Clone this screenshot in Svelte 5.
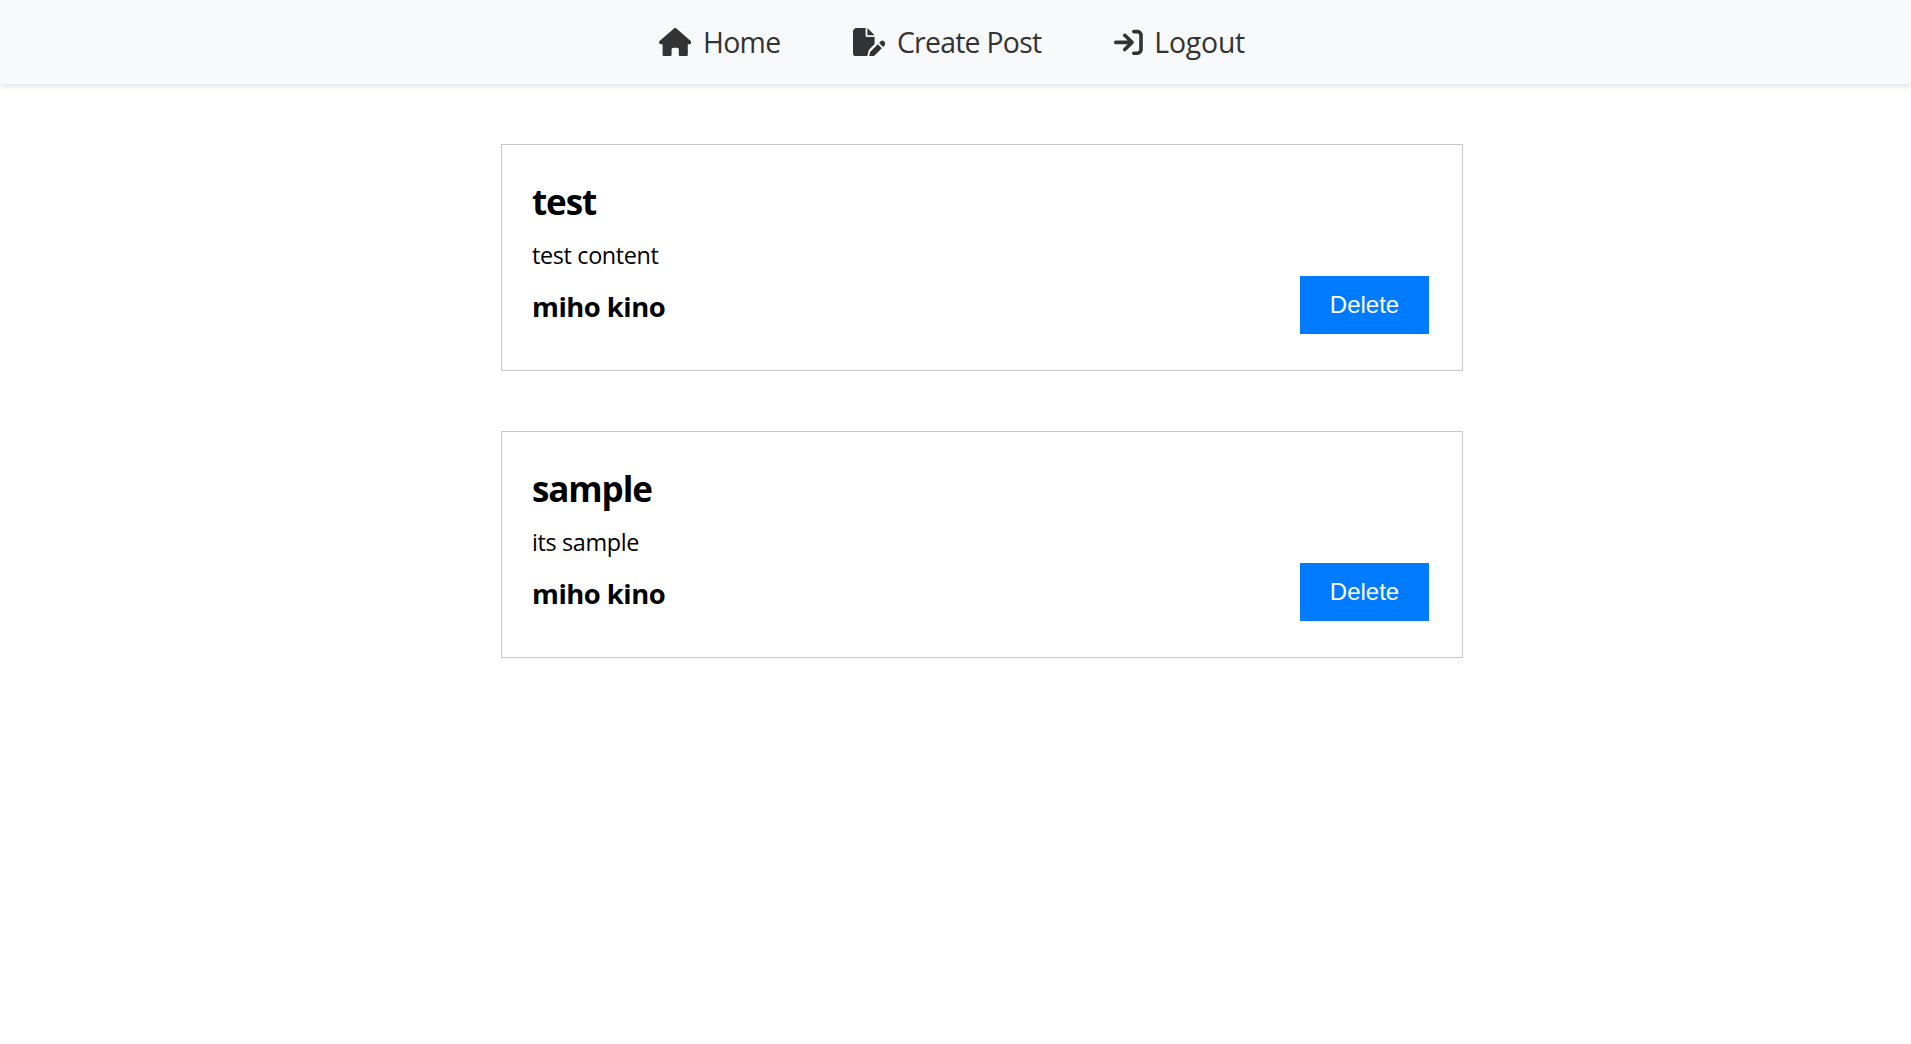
<script lang="ts">
  const links = [
    {
      key: 'home',
      label: 'Home',
      box: '0 0 576 512',
      path: 'M575.8 255.5c0 18-15 32.1-32 32.1l-32 0 .7 160.2c0 2.7-.2 5.4-.5 8.1l0 16.2c0 22.1-17.9 40-40 40l-16 0c-1.1 0-2.2 0-3.3-.1c-1.4 .1-2.8 .1-4.2 .1L416 512l-24 0c-22.1 0-40-17.9-40-40l0-24 0-64c0-17.7-14.3-32-32-32l-64 0c-17.7 0-32 14.3-32 32l0 64 0 24c0 22.1-17.9 40-40 40l-24 0-31.9 0c-1.5 0-3-.1-4.5-.2c-1.2 .1-2.4 .2-3.6 .2l-16 0c-22.1 0-40-17.9-40-40l0-112c0-.9 0-1.9 .1-2.8l0-69.7-32 0c-18 0-32-14-32-32.1c0-9 3-17 10-24L266.4 8c7-7 15-8 22-8s15 2 21 7L564.8 231.5c8 7 12 15 11 24z'
    },
    {
      key: 'create',
      label: 'Create Post',
      box: '0 0 576 512',
      path: 'M0 64C0 28.7 28.7 0 64 0L224 0l0 128c0 17.7 14.3 32 32 32l128 0 0 125.7-86.8 86.8c-10.3 10.3-17.5 23.1-21 37.2l-18.7 74.9c-2.3 9.2-1.8 18.8 1.3 27.5L64 512c-35.3 0-64-28.7-64-64L0 64zm384 64l-128 0L256 0 384 128zM549.8 235.7l14.4 14.4c15.6 15.6 15.6 40.9 0 56.6l-29.4 29.4-71-71 29.4-29.4c15.6-15.6 40.9-15.6 56.6 0zM311.9 417L441.1 287.8l71 71L382.9 487.9c-4.1 4.1-9.2 7-14.9 8.4l-60.1 15c-5.5 1.4-11.2-.2-15.2-4.2s-5.6-9.7-4.2-15.2l15-60.1c1.4-5.6 4.3-10.8 8.4-14.9z'
    },
    {
      key: 'logout',
      label: 'Logout',
      box: '0 0 512 512',
      path: 'M352 96l64 0c17.7 0 32 14.3 32 32l0 256c0 17.7-14.3 32-32 32l-64 0c-17.7 0-32 14.3-32 32s14.3 32 32 32l64 0c53 0 96-43 96-96l0-256c0-53-43-96-96-96l-64 0c-17.7 0-32 14.3-32 32s14.3 32 32 32zm-9.4 182.6c12.5-12.5 12.5-32.8 0-45.3l-128-128c-12.5-12.5-32.8-12.5-45.3 0s-12.5 32.8 0 45.3L242.7 224 32 224c-17.7 0-32 14.3-32 32s14.3 32 32 32l210.7 0-73.4 73.4c-12.5 12.5-12.5 32.8 0 45.3s32.8 12.5 45.3 0l128-128z'
    }
  ];

  let posts = $state([
    { id: 1, title: 'test', content: 'test content', author: 'miho kino' },
    { id: 2, title: 'sample', content: 'its sample', author: 'miho kino' }
  ]);

  function remove(id: number) {
    posts = posts.filter((p) => p.id !== id);
  }
</script>

<nav>
  {#each links as link (link.key)}
    <a href="#{link.key}" class={link.key}>
      <svg viewBox={link.box} aria-hidden="true"><path d={link.path} /></svg>
      <span>{link.label}</span>
    </a>
  {/each}
</nav>

<main>
  {#each posts as post (post.id)}
    <article>
      <h1>{post.title}</h1>
      <p>{post.content}</p>
      <footer>
        <h3>{post.author}</h3>
        <button onclick={() => remove(post.id)}>Delete</button>
      </footer>
    </article>
  {/each}
</main>

<style>
  :global(body) {
    margin: 0;
    background: #fff;
    font-family: 'Segoe UI', 'Open Sans', 'Noto Sans', sans-serif;
    color: #000;
  }

  nav {
    display: flex;
    gap: 72px;
    box-sizing: border-box;
    height: 84px;
    padding-left: 659px;
    align-items: center;
    background: #f8f9fb;
    box-shadow: 0 3px 6px rgba(0, 0, 0, 0.1);
  }

  a {
    display: flex;
    align-items: center;
    gap: 11.5px;
    color: #333;
    font-size: 28.4px;
    line-height: 40px;
    text-decoration: none;
    white-space: nowrap;
  }

  .home {
    width: 122px;
    letter-spacing: -0.65px;
  }

  .create {
    width: 189px;
    letter-spacing: -0.72px;
  }

  .logout {
    width: 131px;
    letter-spacing: -0.2px;
  }

  svg {
    flex: none;
    height: 28.8px;
    fill: currentColor;
  }

  main {
    display: flex;
    flex-direction: column;
    gap: 60px;
    width: 962px;
    margin: 60px 0 0 501px;
  }

  article {
    box-sizing: border-box;
    height: 227px;
    padding: 32px 33px 0 30px;
    border: 1px solid #c8c8c8;
  }

  h1,
  h3,
  p {
    margin: 0;
  }

  h1 {
    font-size: 35px;
    line-height: 50px;
    letter-spacing: -1.1px;
  }

  p {
    margin-top: 11px;
    font-size: 23.4px;
    line-height: 34px;
    letter-spacing: -0.35px;
  }

  footer {
    display: flex;
    justify-content: space-between;
    align-items: flex-start;
    margin-top: 4px;
  }

  h3 {
    margin-top: 12px;
    font-size: 27.4px;
    line-height: 38px;
    letter-spacing: -0.5px;
  }

  button {
    width: 129px;
    height: 58px;
    padding: 0;
    border: 0;
    background: #007bff;
    color: #fff;
    font: 24px 'Liberation Sans', Arial, sans-serif;
    cursor: pointer;
  }
</style>
